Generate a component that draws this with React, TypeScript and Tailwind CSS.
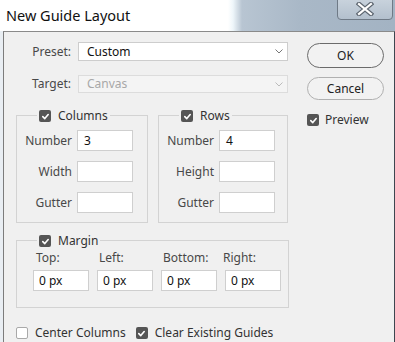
import React from "react";

const font = { fontFamily: '"Noto Sans", "Open Sans", sans-serif' };

function Check({ checked }: { checked: boolean }) {
  if (!checked)
    return <div className="w-[12px] h-[12px] shrink-0 rounded-[2px] border border-[#a9a9a9] bg-white" />;
  return (
    <div className="w-[12px] h-[12px] shrink-0 rounded-[2px] bg-[#555555] flex items-center justify-center">
      <svg width="9" height="9" viewBox="0 0 10 10">
        <path d="M2 5.2 L4.2 7.3 L8 2.8" stroke="#fff" strokeWidth="1.8" fill="none" strokeLinecap="round" strokeLinejoin="round" />
      </svg>
    </div>
  );
}

function Chevron({ color }: { color: string }) {
  return (
    <svg width="8" height="5" viewBox="0 0 8 5">
      <path d="M0.5 0.5 L4 4 L7.5 0.5" stroke={color} strokeWidth="1" fill="none" />
    </svg>
  );
}

function Field({ label, value }: { label: string; value?: string }) {
  return (
    <div className="flex items-center h-[21px]">
      <div className="w-[60px] text-right text-[#484848] pr-[5px] whitespace-nowrap">{label}</div>
      <div className="w-[56px] h-[21px] bg-white border border-[#cfcfcf] flex items-center px-[6px] text-[#111]">{value}</div>
    </div>
  );
}

function Group({ title, w, children }: { title: string; w: string; children: React.ReactNode }) {
  return (
    <div className={`relative border border-[#d3d3d3] ${w}`}>
      <div className="absolute left-[20px] top-[-7px] flex items-center gap-[7px] bg-[#f0f0f0] px-[2px] text-[#333] leading-[14px]">
        <Check checked />
        <span>{title}</span>
      </div>
      {children}
    </div>
  );
}

export default function App() {
  return (
    <div className="w-[395px] h-[342px] flex flex-col bg-[#e9eef3] text-[12px] overflow-hidden" style={font}>
      <div className="h-[31px] shrink-0 relative bg-[linear-gradient(to_right,#ffffff_0px,#ffffff_228px,#eef6fa_233px,#b8c5d2_242px,#a9b8c7_300px,#a3b3c3_395px)]">
        <div className="absolute left-[6px] top-[5px] text-[14.5px] text-[#111] leading-[20px]">New Guide Layout</div>
        <div className="absolute left-[337px] top-[-2px] w-[56px] h-[22px] rounded-b-[4px] border border-[#6f7a86] bg-[linear-gradient(to_bottom,#c9d3dd,#b3c0cd)] flex items-center justify-center">
          <svg width="18" height="14" viewBox="0 0 18 14">
            <path d="M3 2 L15 12 M15 2 L3 12" stroke="#5d6670" strokeWidth="4.5" strokeLinecap="square" />
            <path d="M3 2 L15 12 M15 2 L3 12" stroke="#ffffff" strokeWidth="2.2" strokeLinecap="square" />
          </svg>
        </div>
      </div>
      <div className="flex-1 ml-[3px] border-l border-t border-r border-l-[#7c7c7c] border-t-[#8a8a8a] border-r-[#3d4650] bg-[#f0f0f0] flex text-[#484848]">
        <div className="w-[286px] shrink-0 flex flex-col pt-[10px]">
          <div className="flex items-center">
            <div className="w-[68px] text-right pr-[1px]">Preset:</div>
            <div className="ml-[6px] w-[210px] h-[19px] bg-white border border-[#cdcdcd] flex items-center justify-between pl-[8px] pr-[4px] text-[#111]">
              <span>Custom</span>
              <Chevron color="#777" />
            </div>
          </div>
          <div className="flex items-center mt-[14px]">
            <div className="w-[68px] text-right pr-[1px]">Target:</div>
            <div className="ml-[6px] w-[210px] h-[18px] bg-[#f4f4f4] border border-[#dcdcdc] flex items-center justify-between pl-[8px] pr-[4px] text-[#a8a8a8]">
              <span>Canvas</span>
              <Chevron color="#bbb" />
            </div>
          </div>
          <div className="flex mt-[22px] ml-[12px] gap-[10px]">
            <Group title="Columns" w="w-[132px] h-[108px]">
              <div className="flex flex-col gap-[10px] pt-[14px]">
                <Field label="Number" value="3" />
                <Field label="Width" />
                <Field label="Gutter" />
              </div>
            </Group>
            <Group title="Rows" w="w-[130px] h-[108px]">
              <div className="flex flex-col gap-[10px] pt-[14px]">
                <Field label="Number" value="4" />
                <Field label="Height" />
                <Field label="Gutter" />
              </div>
            </Group>
          </div>
          <div className="mt-[17px] ml-[12px]">
            <Group title="Margin" w="w-[273px] h-[68px]">
              <div className="grid grid-cols-[56px_56px_56px_56px] gap-x-[8px] pl-[16px] pt-[8px]">
                <div className="pl-[3px] h-[17px]">Top:</div>
                <div className="pl-[2px] h-[17px]">Left:</div>
                <div className="pl-[2px] h-[17px]">Bottom:</div>
                <div className="pl-[0px] h-[17px] -ml-[2px]">Right:</div>
                {["0 px", "0 px", "0 px", "0 px"].map((v, i) => (
                  <div key={i} className="mt-[4px] h-[21px] bg-white border border-[#cfcfcf] flex items-center px-[5px] text-[#111]">{v}</div>
                ))}
              </div>
            </Group>
          </div>
          <div className="flex items-center mt-[18px] ml-[12px] leading-[14px]">
            <Check checked={false} />
            <span className="ml-[7px] text-[#333]">Center Columns</span>
            <div className="ml-[10px]"><Check checked /></div>
            <span className="ml-[7px] text-[#333]">Clear Existing Guides</span>
          </div>
        </div>
        <div className="flex flex-col pt-[11px] pl-[17px]">
          <div className="w-[77px] h-[25px] rounded-full border border-[#6b6b6b] bg-[#f2f2f2] flex items-center justify-center text-[#222]">OK</div>
          <div className="mt-[9px] w-[77px] h-[23px] rounded-full border border-[#b0b0b0] bg-[#f2f2f2] flex items-center justify-center text-[#222]">Cancel</div>
          <div className="mt-[13px] flex items-center leading-[14px]">
            <Check checked />
            <span className="ml-[6px] text-[#333]">Preview</span>
          </div>
        </div>
      </div>
    </div>
  );
}
